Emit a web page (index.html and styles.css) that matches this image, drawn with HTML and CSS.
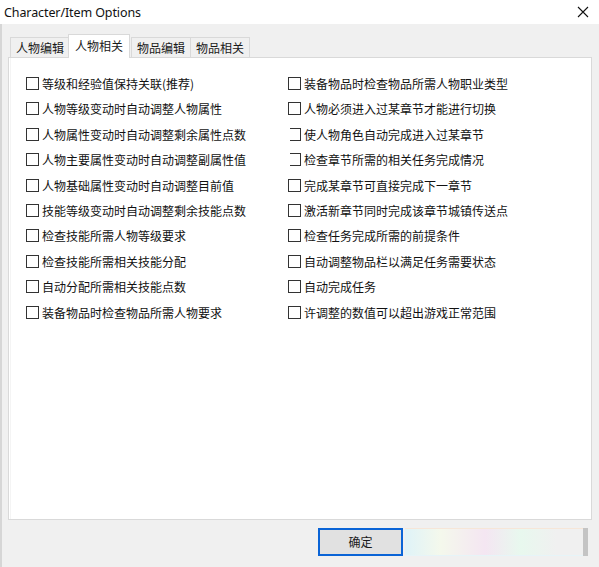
FILE: index.html
```html
<!DOCTYPE html>
<html lang="zh-CN">
<head>
<meta charset="UTF-8">
<title>Character/Item Options</title>
<link rel="stylesheet" href="styles.css">
</head>
<body>

<div class="window">
<div class="titlebar">
<span class="title">Character/Item Options</span>
<span class="close">
<svg width="12" height="12" viewBox="0 0 12 12"><path d="M1 1L11 11M11 1L1 11" stroke="#111" stroke-width="1.1" fill="none"/></svg>
</span>
</div>

<div class="dialog">
<div class="tabs">
<div class="tab">人物编辑</div>
<div class="tab active">人物相关</div>
<div class="tab">物品编辑</div>
<div class="tab">物品相关</div>
</div>

<div class="panel">
<div class="opts">
<label class="opt"><span class="box"></span>等级和经验值保持关联(推荐)</label>
<label class="opt"><span class="box"></span>装备物品时检查物品所需人物职业类型</label>
<label class="opt"><span class="box"></span>人物等级变动时自动调整人物属性</label>
<label class="opt"><span class="box"></span>人物必须进入过某章节才能进行切换</label>
<label class="opt"><span class="box"></span>人物属性变动时自动调整剩余属性点数</label>
<label class="opt"><span class="box cut"></span>使人物角色自动完成进入过某章节</label>
<label class="opt"><span class="box"></span>人物主要属性变动时自动调整副属性值</label>
<label class="opt"><span class="box cut"></span>检查章节所需的相关任务完成情况</label>
<label class="opt"><span class="box"></span>人物基础属性变动时自动调整目前值</label>
<label class="opt"><span class="box"></span>完成某章节可直接完成下一章节</label>
<label class="opt"><span class="box"></span>技能等级变动时自动调整剩余技能点数</label>
<label class="opt"><span class="box"></span>激活新章节同时完成该章节城镇传送点</label>
<label class="opt"><span class="box"></span>检查技能所需人物等级要求</label>
<label class="opt"><span class="box"></span>检查任务完成所需的前提条件</label>
<label class="opt"><span class="box"></span>检查技能所需相关技能分配</label>
<label class="opt"><span class="box"></span>自动调整物品栏以满足任务需要状态</label>
<label class="opt"><span class="box"></span>自动分配所需相关技能点数</label>
<label class="opt"><span class="box"></span>自动完成任务</label>
<label class="opt"><span class="box"></span>装备物品时检查物品所需人物要求</label>
<label class="opt"><span class="box"></span>许调整的数值可以超出游戏正常范围</label>
</div>
</div>

<div class="footer">
<div class="btn ok">确定</div>
<div class="streak"></div>
<div class="grip"></div>
</div>
</div>
</div>

</body>
</html>
```

FILE: styles.css
```css
*{box-sizing: border-box;}

body{
margin:0;
width:599px; height:567px;
overflow:hidden;
font-family: "Noto Sans CJK SC", "Noto Sans", sans-serif;
color:#1a1a1a;
}

.window{
width:599px; height:567px;
display:flex;
flex-direction:column;
background:#f0f0f0;
}

.titlebar{
height:24px;
background:#fff;
display:flex;
justify-content:space-between;
align-items:center;
padding:0 10px 0 4px;
}

.title{
font-family: "Noto Sans", sans-serif;
font-size:12.5px;
color:#111;
letter-spacing:-0.1px;
}

.close{display:flex; align-items:center;}

.dialog{
flex:1;
display:flex;
flex-direction:column;
border-left:2px solid #d6d6d6;
padding:9px 7px 0 6px;
}

.tabs{
display:flex;
align-items:flex-end;
height:24px;
padding-left:2px;
}

.tab{
height:20px;
padding:0 5px;
font-size:12px;
line-height:19px;
border:1px solid #d9d9d9;
border-bottom:none;
background:#f0f0f0;
margin-right:-1px;
}

.tab.active{
height:24px;
line-height:22px;
padding:0 6px;
background:#fff;
position:relative;
z-index:1;
margin:0 1px -1px -1px;
}

.panel{
height:463px;
background:#fff;
border:1px solid #d9d9d9;
box-shadow: inset 1px 0 0 #fff, inset 5px 0 0 -3px #f4f4f4;
padding:13px 0 0 17px;
}

.opts{
display:grid;
grid-template-columns:262px 1fr;
grid-auto-rows:25.4px;
}

.opt{
display:flex;
align-items:center;
font-size:12px;
height:25px;
white-space:nowrap;
color:#111;
}

.box{
width:13px; height:13px;
border:1px solid #333;
margin-right:3px;
flex:none;
}

.box.cut{
width:11px;
margin-left:2px;
border-left:none;
}

.footer{
flex:1;
display:flex;
align-items:center;
padding-left:310px;
padding-bottom:4px;
}

.btn{
width:85px; height:28px;
border:2px solid #0a64d6;
background:#e1e1e1;
font-size:12px;
display:flex;
justify-content:center;
align-items:center;
}

.streak{
width:178px; height:28px;
margin-left:2px;
background:linear-gradient(90deg, #dff3f8 0%, #f4f8ec 20%, #f4e6f2 45%, #e8f8ee 65%, #f0f0f0 85%);
border-top:1px solid #f6e6d8;
border-bottom:1px solid #e6f4f8;
}

.grip{
width:5px; height:28px;
background:#c4c4c4;
}
```
